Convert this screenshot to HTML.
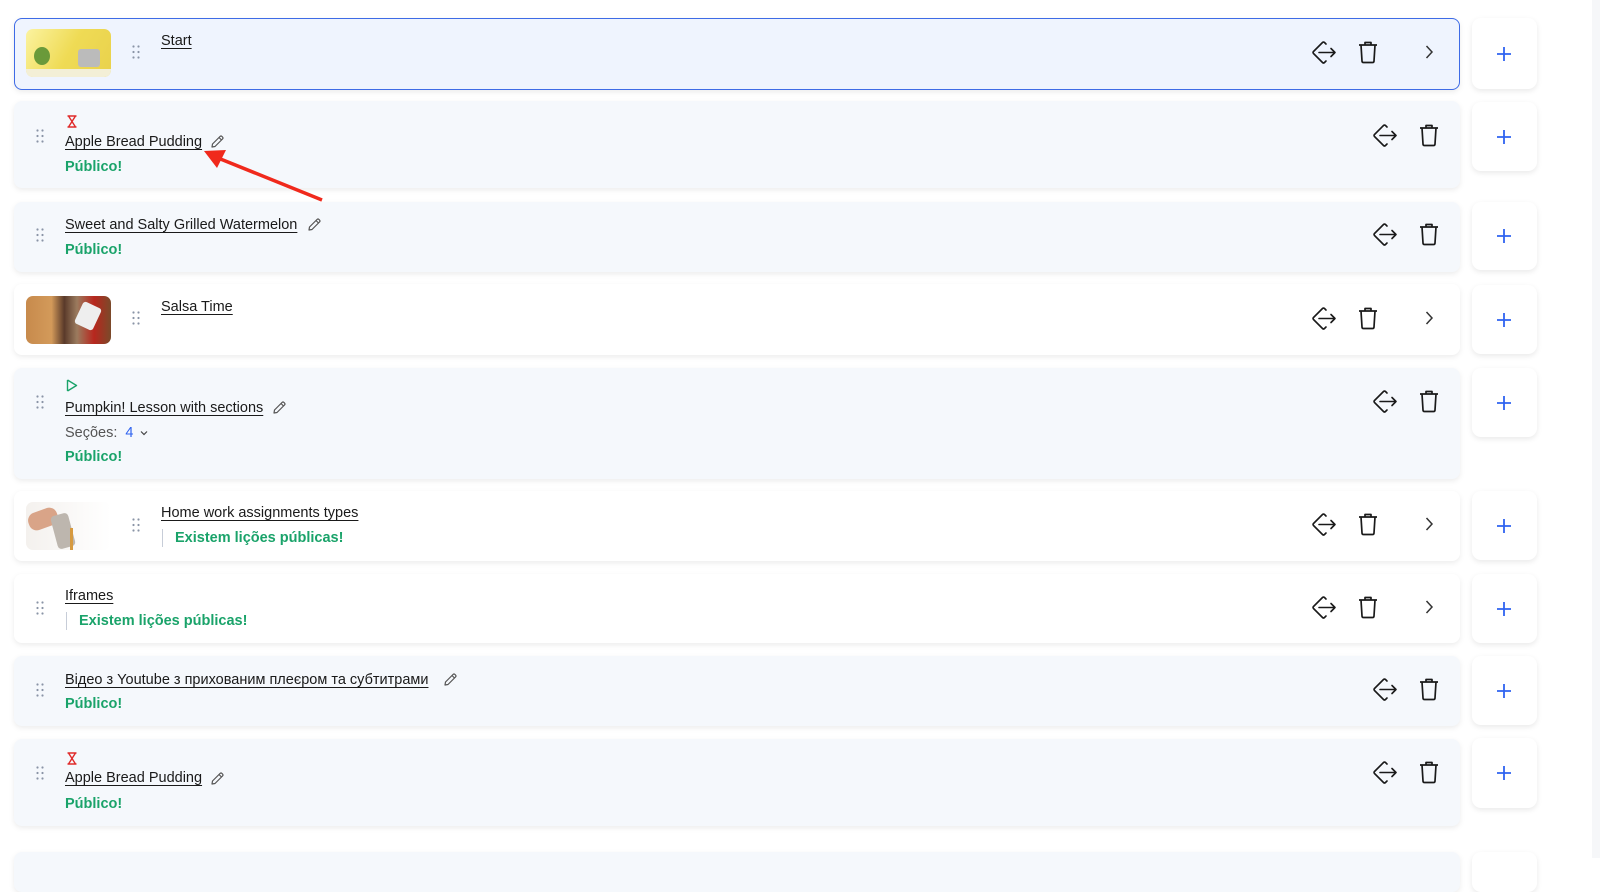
<!DOCTYPE html>
<html><head><meta charset="utf-8"><style>
*{box-sizing:border-box;margin:0;padding:0}
body{width:1600px;height:858px;overflow:hidden;background:#fff;font-family:"Liberation Sans",sans-serif;position:relative;color:#1a1a1a}
.strip{position:absolute;left:1592px;top:0;width:8px;height:858px;background:#f6f7f9}
.card{position:absolute;left:14px;width:1446px;border-radius:8px;box-shadow:0 2px 6px rgba(0,0,0,.08)}
.g{background:#f5f8fc}.w{background:#fff}
.sel{background:#eff4fe;border:1px solid #3e6be6}
.plus{position:absolute;left:1472px;width:65px;background:#fff;border-radius:9px;box-shadow:0 2px 6px rgba(0,0,0,.09)}
.plus svg{position:absolute;left:24px;top:50%;margin-top:-8px}
.t{position:absolute;font-size:14.5px;text-decoration:underline;text-underline-offset:3px;text-decoration-thickness:1px;white-space:nowrap;line-height:18px}
.pub{position:absolute;font-size:14.5px;color:#1aa36a;font-weight:bold;line-height:18px}
.ex{position:absolute;font-size:14.5px;color:#1aa36a;font-weight:bold;line-height:18px;padding-left:12px;border-left:1px solid #c7cdd8}
.dots{position:absolute;width:8px;height:14px}
.ico{position:absolute}
.thumb{position:absolute;left:26px;width:85px;height:48px;border-radius:7px;overflow:hidden}
</style></head><body>
<div class="strip"></div>
<svg width="0" height="0" style="position:absolute">
<defs>
<symbol id="mv" viewBox="0 0 26 26"><path d="M15 4 L13.5 2.5 Q12.5 1.5 11.5 2.5 L2.5 11.5 Q1.5 12.5 2.5 13.5 L11.5 22.5 Q12.5 23.5 13.5 22.5 L15 21 M8 12.5 H24 M20 8.5 L24 12.5 L20 16.5" fill="none" stroke="#1a1a1a" stroke-width="1.6" stroke-linecap="round" stroke-linejoin="round"/></symbol>
<symbol id="tr" viewBox="0 0 22 24"><path d="M2 5 H20 M8 5 V2.5 H14 V5 M4 5 L5 21 Q5 22.5 6.5 22.5 H15.5 Q17 22.5 17 21 L18 5" fill="none" stroke="#1a1a1a" stroke-width="1.7" stroke-linejoin="round"/></symbol>
<symbol id="dt" viewBox="0 0 8 14"><g fill="#8a94a6"><circle cx="1.5" cy="1.5" r="1.1"/><circle cx="6.5" cy="1.5" r="1.1"/><circle cx="1.5" cy="7" r="1.1"/><circle cx="6.5" cy="7" r="1.1"/><circle cx="1.5" cy="12.5" r="1.1"/><circle cx="6.5" cy="12.5" r="1.1"/></g></symbol>
<symbol id="pen" viewBox="0 0 16 16"><path d="M3 13 L3.5 10 L11 2.5 Q12 1.5 13 2.5 L13.5 3 Q14.5 4 13.5 5 L6 12.5 Z M10 3.5 L12.5 6" fill="none" stroke="#555" stroke-width="1.2" stroke-linejoin="round"/></symbol>
<symbol id="pl" viewBox="0 0 16 16"><path d="M8 1 V15 M1 8 H15" stroke="#2f63f0" stroke-width="1.8"/></symbol>
<symbol id="ch" viewBox="0 0 10 16"><path d="M2.5 2 L8 8 L2.5 14" fill="none" stroke="#333" stroke-width="1.5"/></symbol>
</defs></svg>

<div class="card sel" style="top:18px;height:72px"></div>
<div class="thumb" style="top:29px;background:linear-gradient(120deg,#fbf3a0,#efdb55 50%,#e9d14c)"><div style="position:absolute;left:0;bottom:0;width:85px;height:8px;background:#f3efd6"></div><div style="position:absolute;left:52px;top:20px;width:22px;height:18px;background:#bbb;border-radius:3px"></div><div style="position:absolute;left:8px;top:18px;width:16px;height:18px;background:#6a9a3a;border-radius:50%"></div></div>
<svg class="dots" style="left:132px;top:45px"><use href="#dt"/></svg>
<div class="t" style="left:161px;top:32px">Start</div>

<div class="card g" style="top:101px;height:87px"></div>
<svg class="dots" style="left:36px;top:129px"><use href="#dt"/></svg>
<svg class="ico" style="left:66px;top:115px" width="12" height="13" viewBox="0 0 12 13"><path d="M1.5 1 H10.5 M1.5 12 H10.5 M2.5 1 L6 6.5 L2.5 12 M9.5 1 L6 6.5 L9.5 12" fill="none" stroke="#e02a2a" stroke-width="1.4"/></svg>
<div class="t" style="left:65px;top:133px">Apple Bread Pudding</div>
<svg class="ico" style="left:209px;top:134px" width="16" height="16"><use href="#pen"/></svg>
<div class="pub" style="left:65px;top:158px">Público!</div>
<svg class="ico" style="left:200px;top:144px" width="130" height="60" viewBox="0 0 130 60"><path d="M122 56 L18 14" stroke="#f0291c" stroke-width="3.5"/><path d="M4 7 L26 6 L17 24 Z" fill="#f0291c"/></svg>

<div class="card g" style="top:202px;height:70px"></div>
<svg class="dots" style="left:36px;top:228px"><use href="#dt"/></svg>
<div class="t" style="left:65px;top:216px">Sweet and Salty Grilled Watermelon</div>
<svg class="ico" style="left:306px;top:217px" width="16" height="16"><use href="#pen"/></svg>
<div class="pub" style="left:65px;top:241px">Público!</div>

<div class="card w" style="top:284px;height:71px"></div>
<div class="thumb" style="top:296px;background:linear-gradient(90deg,#c78a4c 0,#d39a5a 30%,#5a3a2a 45%,#9b7b5e 60%,#b8271e 80%,#7a4a2a)"><div style="position:absolute;left:52px;top:8px;width:20px;height:24px;background:#eee;border-radius:3px;transform:rotate(25deg)"></div></div>
<svg class="dots" style="left:132px;top:311px"><use href="#dt"/></svg>
<div class="t" style="left:161px;top:298px">Salsa Time</div>

<div class="card g" style="top:368px;height:111px"></div>
<svg class="dots" style="left:36px;top:395px"><use href="#dt"/></svg>
<svg class="ico" style="left:66px;top:379px" width="12" height="13" viewBox="0 0 12 13"><path d="M1.5 1 V12 M1.5 1 L10.5 6.5 L1.5 12" fill="none" stroke="#1aa36a" stroke-width="1.4" stroke-linejoin="round"/></svg>
<div class="t" style="left:65px;top:399px">Pumpkin! Lesson with sections</div>
<svg class="ico" style="left:271px;top:400px" width="16" height="16"><use href="#pen"/></svg>
<div style="position:absolute;left:65px;top:424px;font-size:14.5px;color:#555;line-height:18px">Seções: <span style="color:#2f63f0;margin-left:4px">4</span></div>
<svg class="ico" style="left:140px;top:430px" width="8" height="6" viewBox="0 0 8 6"><path d="M1 1.5 L4 4.5 L7 1.5" fill="none" stroke="#444" stroke-width="1.2"/></svg>
<div class="pub" style="left:65px;top:448px">Público!</div>

<div class="card w" style="top:491px;height:70px"></div>
<div class="thumb" style="top:502px;background:linear-gradient(90deg,#f4f1ee,#fff)"><div style="position:absolute;left:2px;top:8px;width:30px;height:18px;background:#d9a488;border-radius:8px;transform:rotate(-20deg)"></div><div style="position:absolute;left:28px;top:12px;width:18px;height:34px;background:#bdb6ae;border-radius:4px;transform:rotate(-15deg)"></div><div style="position:absolute;left:44px;top:26px;width:3px;height:22px;background:#d69a40"></div></div>
<svg class="dots" style="left:132px;top:518px"><use href="#dt"/></svg>
<div class="t" style="left:161px;top:504px">Home work assignments types</div>
<div class="ex" style="left:162px;top:529px">Existem lições públicas!</div>

<div class="card w" style="top:574px;height:69px"></div>
<svg class="dots" style="left:36px;top:601px"><use href="#dt"/></svg>
<div class="t" style="left:65px;top:587px">Iframes</div>
<div class="ex" style="left:66px;top:612px">Existem lições públicas!</div>

<div class="card g" style="top:656px;height:70px"></div>
<svg class="dots" style="left:36px;top:683px"><use href="#dt"/></svg>
<div class="t" style="left:65px;top:671px">Відео з Youtube з прихованим плеєром та субтитрами</div>
<svg class="ico" style="left:442px;top:672px" width="16" height="16"><use href="#pen"/></svg>
<div class="pub" style="left:65px;top:695px">Público!</div>

<div class="card g" style="top:739px;height:87px"></div>
<svg class="dots" style="left:36px;top:766px"><use href="#dt"/></svg>
<svg class="ico" style="left:66px;top:752px" width="12" height="13" viewBox="0 0 12 13"><path d="M1.5 1 H10.5 M1.5 12 H10.5 M2.5 1 L6 6.5 L2.5 12 M9.5 1 L6 6.5 L9.5 12" fill="none" stroke="#e02a2a" stroke-width="1.4"/></svg>
<div class="t" style="left:65px;top:769px">Apple Bread Pudding</div>
<svg class="ico" style="left:209px;top:771px" width="16" height="16"><use href="#pen"/></svg>
<div class="pub" style="left:65px;top:795px">Público!</div>

<div class="card g" style="top:852px;height:40px"></div>
<div class="plus" style="top:852px;height:40px"></div>

<svg class="ico" style="left:1311px;top:40px" width="26" height="26"><use href="#mv"/></svg>
<svg class="ico" style="left:1357px;top:40px" width="22" height="24"><use href="#tr"/></svg>
<svg class="ico" style="left:1424px;top:44px" width="10" height="16"><use href="#ch"/></svg>

<svg class="ico" style="left:1372px;top:123px" width="26" height="26"><use href="#mv"/></svg>
<svg class="ico" style="left:1418px;top:123px" width="22" height="24"><use href="#tr"/></svg>

<svg class="ico" style="left:1372px;top:222px" width="26" height="26"><use href="#mv"/></svg>
<svg class="ico" style="left:1418px;top:222px" width="22" height="24"><use href="#tr"/></svg>

<svg class="ico" style="left:1311px;top:306px" width="26" height="26"><use href="#mv"/></svg>
<svg class="ico" style="left:1357px;top:306px" width="22" height="24"><use href="#tr"/></svg>
<svg class="ico" style="left:1424px;top:310px" width="10" height="16"><use href="#ch"/></svg>

<svg class="ico" style="left:1372px;top:389px" width="26" height="26"><use href="#mv"/></svg>
<svg class="ico" style="left:1418px;top:389px" width="22" height="24"><use href="#tr"/></svg>

<svg class="ico" style="left:1311px;top:512px" width="26" height="26"><use href="#mv"/></svg>
<svg class="ico" style="left:1357px;top:512px" width="22" height="24"><use href="#tr"/></svg>
<svg class="ico" style="left:1424px;top:516px" width="10" height="16"><use href="#ch"/></svg>

<svg class="ico" style="left:1311px;top:595px" width="26" height="26"><use href="#mv"/></svg>
<svg class="ico" style="left:1357px;top:595px" width="22" height="24"><use href="#tr"/></svg>
<svg class="ico" style="left:1424px;top:599px" width="10" height="16"><use href="#ch"/></svg>

<svg class="ico" style="left:1372px;top:677px" width="26" height="26"><use href="#mv"/></svg>
<svg class="ico" style="left:1418px;top:677px" width="22" height="24"><use href="#tr"/></svg>

<svg class="ico" style="left:1372px;top:760px" width="26" height="26"><use href="#mv"/></svg>
<svg class="ico" style="left:1418px;top:760px" width="22" height="24"><use href="#tr"/></svg>

<div class="plus" style="top:18px;height:71px"><svg width="16" height="16"><use href="#pl"/></svg></div>
<div class="plus" style="top:102px;height:69px"><svg width="16" height="16"><use href="#pl"/></svg></div>
<div class="plus" style="top:202px;height:68px"><svg width="16" height="16"><use href="#pl"/></svg></div>
<div class="plus" style="top:285px;height:69px"><svg width="16" height="16"><use href="#pl"/></svg></div>
<div class="plus" style="top:368px;height:69px"><svg width="16" height="16"><use href="#pl"/></svg></div>
<div class="plus" style="top:491px;height:69px"><svg width="16" height="16"><use href="#pl"/></svg></div>
<div class="plus" style="top:574px;height:69px"><svg width="16" height="16"><use href="#pl"/></svg></div>
<div class="plus" style="top:656px;height:69px"><svg width="16" height="16"><use href="#pl"/></svg></div>
<div class="plus" style="top:738px;height:70px"><svg width="16" height="16"><use href="#pl"/></svg></div>
</body></html>
